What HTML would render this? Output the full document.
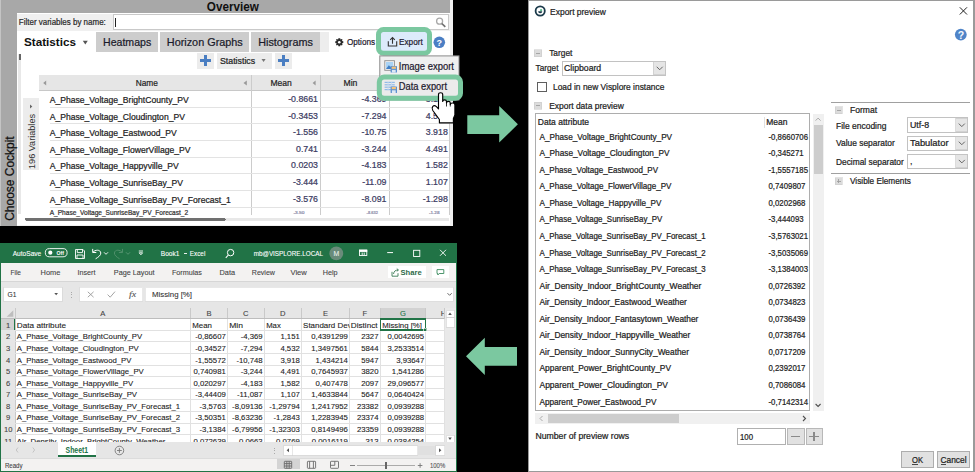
<!DOCTYPE html>
<html><head><meta charset="utf-8"><title>Visplore export</title>
<style>
html,body{margin:0;padding:0;background:#000;width:975px;height:472px;overflow:hidden}
svg{display:block;font-family:"Liberation Sans",sans-serif}
</style></head><body>
<svg width="975" height="472" viewBox="0 0 975 472" shape-rendering="crispEdges">
<rect x="0" y="0" width="975" height="472" fill="#000"/>
<rect x="0" y="0" width="453" height="226" fill="#f0f0f0"/>
<rect x="0" y="0" width="449.5" height="13" fill="#a8a8a8"/>
<rect x="0" y="0" width="17" height="226" fill="#a8a8a8"/>
<rect x="0" y="0" width="1" height="226" fill="#c4c4c4"/>
<rect x="17" y="13" width="432.5" height="213" fill="#ffffff"/>
<rect x="17" y="224.5" width="432.5" height="1.5" fill="#f0f0f0"/>
<text x="206.8" y="10.7" font-size="12" fill="#101010" font-weight="bold" textLength="52" lengthAdjust="spacingAndGlyphs">Overview</text>
<rect x="17" y="13" width="432.5" height="17.5" fill="#f0f0f0"/>
<line x1="17" y1="13.5" x2="449.5" y2="13.5" stroke="#ffffff" stroke-width="1"/>
<text x="18.8" y="25.2" font-size="8.4" fill="#2b2b2b" textLength="87" lengthAdjust="spacingAndGlyphs" stroke="#2b2b2b" stroke-width="0.22">Filter variables by name:</text>
<rect x="113" y="14.5" width="335" height="15" fill="#ffffff" stroke="#c9c9c9" stroke-width="1"/>
<line x1="115.5" y1="17.5" x2="115.5" y2="27" stroke="#222" stroke-width="1"/>
<g shape-rendering="geometricPrecision"><circle cx="439.6" cy="21.2" r="3" fill="none" stroke="#a8a8a8" stroke-width="1.3"/><line x1="441.8" y1="23.5" x2="445.3" y2="26.8" stroke="#707070" stroke-width="1.7"/></g>
<text x="24" y="45.7" font-size="11.5" fill="#111" font-weight="bold" textLength="52" lengthAdjust="spacingAndGlyphs">Statistics</text>
<path shape-rendering="geometricPrecision" d="M82.8 40.8 L87.8 40.8 L85.3 44.4 Z" fill="#555"/>
<rect x="96.2" y="31.6" width="61.89999999999999" height="20" fill="#cdcdcd"/>
<text x="103" y="45.9" font-size="11.3" fill="#1a1a2a" textLength="48.2" lengthAdjust="spacingAndGlyphs" stroke="#1a1a2a" stroke-width="0.22">Heatmaps</text>
<rect x="160.1" y="31.6" width="88.9" height="20" fill="#cdcdcd"/>
<text x="166.8" y="45.9" font-size="11.3" fill="#1a1a2a" textLength="76" lengthAdjust="spacingAndGlyphs" stroke="#1a1a2a" stroke-width="0.22">Horizon Graphs</text>
<rect x="251" y="31.6" width="68.69999999999999" height="20" fill="#cdcdcd"/>
<text x="258.2" y="45.9" font-size="11.3" fill="#1a1a2a" textLength="54.7" lengthAdjust="spacingAndGlyphs" stroke="#1a1a2a" stroke-width="0.22">Histograms</text>
<rect x="319.7" y="31.6" width="9.3" height="20" fill="#ededed"/>
<g shape-rendering="geometricPrecision" transform="translate(339.3,42.2)"><path d="M-0.9,-4 L0.9,-4 L1.2,-2.6 L2.5,-3.3 L3.3,-2.5 L2.6,-1.2 L4,-0.9 L4,0.9 L2.6,1.2 L3.3,2.5 L2.5,3.3 L1.2,2.6 L0.9,4 L-0.9,4 L-1.2,2.6 L-2.5,3.3 L-3.3,2.5 L-2.6,1.2 L-4,0.9 L-4,-0.9 L-2.6,-1.2 L-3.3,-2.5 L-2.5,-3.3 L-1.2,-2.6 Z" fill="#2a2a2a"/><circle r="1.3" fill="#fff"/></g>
<text x="347" y="45" font-size="9.6" fill="#1e1a2e" textLength="28" lengthAdjust="spacingAndGlyphs" stroke="#1e1a2e" stroke-width="0.22">Options</text>
<rect x="381" y="32" width="46" height="19.6" fill="#dcebfb"/>
<g shape-rendering="geometricPrecision" fill="none" stroke="#333" stroke-width="1.1"><path d="M388.3 41.2 V46 H396.7 V41.2"/><path d="M392.5 43.8 V37.6 M390.2 39.9 L392.5 37.6 L394.8 39.9"/></g>
<text x="399" y="45" font-size="9.6" fill="#1e1a2e" textLength="23.7" lengthAdjust="spacingAndGlyphs" stroke="#1e1a2e" stroke-width="0.22">Export</text>
<g shape-rendering="geometricPrecision"><circle cx="439.3" cy="42.3" r="5.8" fill="#4b7fc4"/><text x="439.3" y="46.3" font-size="9" font-weight="bold" fill="#fff" text-anchor="middle">?</text></g>
<rect x="197" y="52.5" width="16.7" height="16.4" fill="#ececec"/>
<rect x="203.8" y="55.3" width="3.4" height="10.5" fill="#4a7ec2"/>
<rect x="199.9" y="58.7" width="11" height="3.5" fill="#4a7ec2"/>
<rect x="217.1" y="52.5" width="54.7" height="16.4" fill="#ececec"/>
<text x="219.9" y="63.8" font-size="8.6" fill="#222" textLength="35.3" lengthAdjust="spacingAndGlyphs" stroke="#222" stroke-width="0.22">Statistics</text>
<path shape-rendering="geometricPrecision" d="M261.5 59 L265.6 59 L263.55 62.1 Z" fill="#777"/>
<rect x="275.2" y="52.5" width="16.7" height="16.4" fill="#ececec"/>
<rect x="282.0" y="55.3" width="3.4" height="10.5" fill="#4a7ec2"/>
<rect x="278.09999999999997" y="58.7" width="11" height="3.5" fill="#4a7ec2"/>
<rect x="18.2" y="54" width="3.2" height="160" fill="#e8e8e8"/>
<rect x="18.8" y="54.4" width="2.4" height="6" fill="#666" rx="1"/>
<rect x="22.7" y="97.8" width="16.6" height="72" fill="#ececec"/>
<path shape-rendering="geometricPrecision" d="M30 104.5 L32.3 106.5 L30 108.5 Z" fill="#666"/>
<text transform="translate(35.3,169) rotate(-90)" font-size="9" fill="#333" textLength="55" lengthAdjust="spacingAndGlyphs">196 Variables</text>
<text transform="translate(13.6,220.8) rotate(-90)" font-size="12.3" fill="#111" stroke="#111" stroke-width="0.25" textLength="84.5" lengthAdjust="spacingAndGlyphs">Choose Cockpit</text>
<rect x="39.2" y="74.6" width="412" height="16" fill="#e6e6e6"/>
<path shape-rendering="geometricPrecision" d="M43.2 83 L46.2 80.6 L46.2 85.4 Z" fill="#999"/>
<text x="135.7" y="85.9" font-size="9.6" fill="#222" textLength="22.2" lengthAdjust="spacingAndGlyphs" stroke="#222" stroke-width="0.22">Name</text>
<path shape-rendering="geometricPrecision" d="M243.5 83 L246.8 80.6 L246.8 85.4 Z" fill="#999"/>
<text x="270.4" y="85.9" font-size="9.6" fill="#222" textLength="21.4" lengthAdjust="spacingAndGlyphs" stroke="#222" stroke-width="0.22">Mean</text>
<path shape-rendering="geometricPrecision" d="M312.6 83 L315.6 80.6 L315.6 85.4 Z" fill="#999"/>
<text x="343.5" y="85.9" font-size="9.6" fill="#222" textLength="13.9" lengthAdjust="spacingAndGlyphs" stroke="#222" stroke-width="0.22">Min</text>
<line x1="39.2" y1="90.5" x2="451" y2="90.5" stroke="#c8c8c8" stroke-width="1"/>
<line x1="251.5" y1="74.6" x2="251.5" y2="215" stroke="#cccccc" stroke-width="1"/>
<line x1="320.5" y1="74.6" x2="320.5" y2="215" stroke="#cccccc" stroke-width="1"/>
<line x1="389.4" y1="74.6" x2="389.4" y2="215" stroke="#cccccc" stroke-width="1"/>
<line x1="449.3" y1="74.6" x2="449.3" y2="215" stroke="#cccccc" stroke-width="1"/>
<text x="49.7" y="103.0" font-size="8.6" fill="#222" stroke="#222" stroke-width="0.22">A_Phase_Voltage_BrightCounty_PV</text>
<text x="318" y="102.0" font-size="8.8" fill="#3b3b62" text-anchor="end" stroke="#3b3b62" stroke-width="0.22">-0.8661</text>
<text x="386.5" y="102.0" font-size="8.8" fill="#3b3b62" text-anchor="end" stroke="#3b3b62" stroke-width="0.22">-4.369</text>
<text x="447.8" y="102.0" font-size="8.8" fill="#3b3b62" text-anchor="end" stroke="#3b3b62" stroke-width="0.22">3.151</text>
<line x1="50" y1="107.3" x2="449.3" y2="107.3" stroke="#e3e3e3" stroke-width="1"/>
<text x="49.7" y="119.6" font-size="8.6" fill="#222" stroke="#222" stroke-width="0.22">A_Phase_Voltage_Cloudington_PV</text>
<text x="318" y="118.6" font-size="8.8" fill="#3b3b62" text-anchor="end" stroke="#3b3b62" stroke-width="0.22">-0.3453</text>
<text x="386.5" y="118.6" font-size="8.8" fill="#3b3b62" text-anchor="end" stroke="#3b3b62" stroke-width="0.22">-7.294</text>
<text x="447.8" y="118.6" font-size="8.8" fill="#3b3b62" text-anchor="end" stroke="#3b3b62" stroke-width="0.22">4.532</text>
<line x1="50" y1="123.92" x2="449.3" y2="123.92" stroke="#e3e3e3" stroke-width="1"/>
<text x="49.7" y="136.2" font-size="8.6" fill="#222" stroke="#222" stroke-width="0.22">A_Phase_Voltage_Eastwood_PV</text>
<text x="318" y="135.2" font-size="8.8" fill="#3b3b62" text-anchor="end" stroke="#3b3b62" stroke-width="0.22">-1.556</text>
<text x="386.5" y="135.2" font-size="8.8" fill="#3b3b62" text-anchor="end" stroke="#3b3b62" stroke-width="0.22">-10.75</text>
<text x="447.8" y="135.2" font-size="8.8" fill="#3b3b62" text-anchor="end" stroke="#3b3b62" stroke-width="0.22">3.918</text>
<line x1="50" y1="140.54" x2="449.3" y2="140.54" stroke="#e3e3e3" stroke-width="1"/>
<text x="49.7" y="152.8" font-size="8.6" fill="#222" stroke="#222" stroke-width="0.22">A_Phase_Voltage_FlowerVillage_PV</text>
<text x="318" y="151.8" font-size="8.8" fill="#3b3b62" text-anchor="end" stroke="#3b3b62" stroke-width="0.22">0.741</text>
<text x="386.5" y="151.8" font-size="8.8" fill="#3b3b62" text-anchor="end" stroke="#3b3b62" stroke-width="0.22">-3.244</text>
<text x="447.8" y="151.8" font-size="8.8" fill="#3b3b62" text-anchor="end" stroke="#3b3b62" stroke-width="0.22">4.491</text>
<line x1="50" y1="157.16" x2="449.3" y2="157.16" stroke="#e3e3e3" stroke-width="1"/>
<text x="49.7" y="169.4" font-size="8.6" fill="#222" stroke="#222" stroke-width="0.22">A_Phase_Voltage_Happyville_PV</text>
<text x="318" y="168.4" font-size="8.8" fill="#3b3b62" text-anchor="end" stroke="#3b3b62" stroke-width="0.22">0.0203</text>
<text x="386.5" y="168.4" font-size="8.8" fill="#3b3b62" text-anchor="end" stroke="#3b3b62" stroke-width="0.22">-4.183</text>
<text x="447.8" y="168.4" font-size="8.8" fill="#3b3b62" text-anchor="end" stroke="#3b3b62" stroke-width="0.22">1.582</text>
<line x1="50" y1="173.78" x2="449.3" y2="173.78" stroke="#e3e3e3" stroke-width="1"/>
<text x="49.7" y="186.0" font-size="8.6" fill="#222" stroke="#222" stroke-width="0.22">A_Phase_Voltage_SunriseBay_PV</text>
<text x="318" y="185.0" font-size="8.8" fill="#3b3b62" text-anchor="end" stroke="#3b3b62" stroke-width="0.22">-3.444</text>
<text x="386.5" y="185.0" font-size="8.8" fill="#3b3b62" text-anchor="end" stroke="#3b3b62" stroke-width="0.22">-11.09</text>
<text x="447.8" y="185.0" font-size="8.8" fill="#3b3b62" text-anchor="end" stroke="#3b3b62" stroke-width="0.22">1.107</text>
<line x1="50" y1="190.4" x2="449.3" y2="190.4" stroke="#e3e3e3" stroke-width="1"/>
<text x="49.7" y="202.60000000000002" font-size="8.6" fill="#222" stroke="#222" stroke-width="0.22">A_Phase_Voltage_SunriseBay_PV_Forecast_1</text>
<text x="318" y="201.60000000000002" font-size="8.8" fill="#3b3b62" text-anchor="end" stroke="#3b3b62" stroke-width="0.22">-3.576</text>
<text x="386.5" y="201.60000000000002" font-size="8.8" fill="#3b3b62" text-anchor="end" stroke="#3b3b62" stroke-width="0.22">-8.091</text>
<text x="447.8" y="201.60000000000002" font-size="8.8" fill="#3b3b62" text-anchor="end" stroke="#3b3b62" stroke-width="0.22">-1.298</text>
<line x1="50" y1="207.01999999999998" x2="449.3" y2="207.01999999999998" stroke="#e3e3e3" stroke-width="1"/>
<text x="49.7" y="214.9" font-size="6.6" fill="#333" textLength="138.5" lengthAdjust="spacingAndGlyphs" stroke="#333" stroke-width="0.22">A_Phase_Voltage_SunriseBay_PV_Forecast_2</text>
<text x="293.4" y="214.2" font-size="4.4" fill="#8a8aa8" textLength="11.0" lengthAdjust="spacingAndGlyphs" stroke="#8a8aa8" stroke-width="0.22">-3.50</text>
<text x="366.6" y="214.2" font-size="4.4" fill="#8a8aa8" textLength="11.299999999999955" lengthAdjust="spacingAndGlyphs" stroke="#8a8aa8" stroke-width="0.22">-8.632</text>
<text x="428.9" y="214.2" font-size="4.4" fill="#8a8aa8" textLength="10.600000000000023" lengthAdjust="spacingAndGlyphs" stroke="#8a8aa8" stroke-width="0.22">-1.28</text>
<rect x="25" y="217.6" width="424" height="3.2" fill="#e8e8e8"/>
<rect x="25" y="217.6" width="200.7" height="3.2" fill="#707070" rx="1.5"/>
<rect x="0" y="243" width="457" height="229" fill="#217346"/>
<rect x="1" y="263" width="454.5" height="206.6" fill="#f3f2f1"/>
<text x="12.7" y="255.9" font-size="7.2" fill="#ffffff" textLength="28.6" lengthAdjust="spacingAndGlyphs" stroke="#ffffff" stroke-width="0.1">AutoSave</text>
<g shape-rendering="geometricPrecision">
<rect x="45.3" y="248.6" width="21.8" height="8.2" fill="none" stroke="#fff" stroke-width="0.9" rx="4.1"/>
<circle cx="50.3" cy="252.7" r="2.1" fill="#fff"/>
<text x="56.6" y="255.3" font-size="5.8" fill="#fff" font-weight="bold" textLength="7.4" lengthAdjust="spacingAndGlyphs">Off</text>
<path shape-rendering="geometricPrecision" d="M75.5 249.5 H83 L84.5 251 V258.5 H75.5 Z M77.3 249.5 V252.6 H82.5 V249.5 M77 258.5 V255 H83 V258.5" fill="none" stroke="#fff" stroke-width="0.9"/>
<path shape-rendering="geometricPrecision" d="M92.9 252.3 C95 249.6 100.4 249.2 100.8 253 C101 255.2 98.3 257.2 95.6 258.8 M92.7 248.9 V252.5 H96.3" fill="none" stroke="#fff" stroke-width="1"/>
<path shape-rendering="geometricPrecision" d="M104 252.3 L106 254.3 L108 252.3" fill="none" stroke="#fff" stroke-width="0.9"/>
<path shape-rendering="geometricPrecision" d="M122.3 252.3 C120.2 249.6 114.8 249.2 114.4 253 C114.2 255.2 116.9 257.2 119.6 258.8 M122.5 248.9 V252.5 H118.9" fill="none" stroke="#4f8f6a" stroke-width="1"/>
<path shape-rendering="geometricPrecision" d="M126 252.3 L128 254.3 L130 252.3" fill="none" stroke="#5c9a77" stroke-width="0.9"/>
<path shape-rendering="geometricPrecision" d="M138.8 251 H143 M139.2 252.8 L140.9 254.8 L142.6 252.8 Z" fill="none" stroke="#fff" stroke-width="0.9"/>
</g>
<text x="160.8" y="255.9" font-size="7.2" fill="#ffffff" textLength="18.6" lengthAdjust="spacingAndGlyphs" stroke="#ffffff" stroke-width="0.1">Book1</text>
<line x1="184.3" y1="253.2" x2="186.6" y2="253.2" stroke="#fff" stroke-width="0.9"/>
<text x="189.8" y="255.9" font-size="7.2" fill="#ffffff" textLength="15.5" lengthAdjust="spacingAndGlyphs" stroke="#ffffff" stroke-width="0.1">Excel</text>
<g shape-rendering="geometricPrecision"><circle cx="230.6" cy="252.6" r="3.2" fill="none" stroke="#fff" stroke-width="1"/><line x1="228.3" y1="255" x2="225.8" y2="257.8" stroke="#fff" stroke-width="1.1"/></g>
<text x="253.7" y="256" font-size="7.2" fill="#ffffff" textLength="69.3" lengthAdjust="spacingAndGlyphs" stroke="#ffffff" stroke-width="0.1">mb@VISPLORE.LOCAL</text>
<g shape-rendering="geometricPrecision"><circle cx="336.3" cy="253.4" r="6.9" fill="#6a8b7a"/></g>
<text x="333.5" y="256.3" font-size="7" fill="#e8efe9" textLength="5.7" lengthAdjust="spacingAndGlyphs" stroke="#e8efe9" stroke-width="0.1">M</text>
<g shape-rendering="geometricPrecision" fill="none" stroke="#fff" stroke-width="0.9">
<rect x="359.5" y="250.3" width="7.3" height="5.2" fill="none" stroke="#fff" stroke-width="0.9"/>
<rect x="359.5" y="250" width="7.3" height="1.6" fill="#fff"/>
<path shape-rendering="geometricPrecision" d="M362.2 252.6 V255 M364.2 252.6 V255" fill="none"/>
<line x1="387.2" y1="252.6" x2="393" y2="252.6" stroke="#fff" stroke-width="1"/>
<rect x="413.6" y="250.3" width="6.2" height="6.2" fill="none" stroke="#fff" stroke-width="0.9"/>
<path shape-rendering="geometricPrecision" d="M440 249.8 L446 255.8 M446 249.8 L440 255.8" fill="none"/>
</g>
<text x="10.5" y="275" font-size="7.6" fill="#444444" textLength="10.5" lengthAdjust="spacingAndGlyphs" stroke="#444444" stroke-width="0.1">File</text>
<text x="40.6" y="275" font-size="7.6" fill="#444444" textLength="19.799999999999997" lengthAdjust="spacingAndGlyphs" stroke="#444444" stroke-width="0.1">Home</text>
<text x="77.5" y="275" font-size="7.6" fill="#444444" textLength="18.0" lengthAdjust="spacingAndGlyphs" stroke="#444444" stroke-width="0.1">Insert</text>
<text x="113.8" y="275" font-size="7.6" fill="#444444" textLength="40.7" lengthAdjust="spacingAndGlyphs" stroke="#444444" stroke-width="0.1">Page Layout</text>
<text x="171.9" y="275" font-size="7.6" fill="#444444" textLength="30.099999999999994" lengthAdjust="spacingAndGlyphs" stroke="#444444" stroke-width="0.1">Formulas</text>
<text x="219.5" y="275" font-size="7.6" fill="#444444" textLength="15.5" lengthAdjust="spacingAndGlyphs" stroke="#444444" stroke-width="0.1">Data</text>
<text x="251.8" y="275" font-size="7.6" fill="#444444" textLength="23.099999999999966" lengthAdjust="spacingAndGlyphs" stroke="#444444" stroke-width="0.1">Review</text>
<text x="290.5" y="275" font-size="7.6" fill="#444444" textLength="16.30000000000001" lengthAdjust="spacingAndGlyphs" stroke="#444444" stroke-width="0.1">View</text>
<text x="322.7" y="275" font-size="7.6" fill="#444444" textLength="14.800000000000011" lengthAdjust="spacingAndGlyphs" stroke="#444444" stroke-width="0.1">Help</text>
<rect x="387.6" y="266" width="38.4" height="12.2" fill="#ffffff"/>
<g shape-rendering="geometricPrecision" fill="none" stroke="#3a7a55" stroke-width="0.9"><path d="M392 271.8 V276.2 H398 V273.2"/><path d="M393.5 274 C394 271 395.5 270 398.3 270 M396.8 268.6 L398.4 270 L396.8 271.4"/></g>
<text x="400.5" y="274.8" font-size="7.8" fill="#2f6b4a" font-weight="bold" textLength="21.2" lengthAdjust="spacingAndGlyphs">Share</text>
<rect x="431.7" y="266" width="17.3" height="12.2" fill="#ffffff"/>
<path shape-rendering="geometricPrecision" d="M437 269.6 H443.8 V273.5 H439.2 L437.8 275 V273.5 H437 Z" fill="none" stroke="#3a8a5c" stroke-width="0.9"/>
<rect x="1" y="281" width="454.5" height="26.7" fill="#e6e6e6"/>
<line x1="1" y1="281.3" x2="455.5" y2="281.3" stroke="#d6d6d6" stroke-width="1"/>
<rect x="3.6" y="287.3" width="58.5" height="14" fill="#ffffff" stroke="#d4d4d4" stroke-width="0.6"/>
<text x="7.6" y="297.1" font-size="8" fill="#333" textLength="8.9" lengthAdjust="spacingAndGlyphs" stroke="#333" stroke-width="0.1">G1</text>
<path shape-rendering="geometricPrecision" d="M54.3 293 L58 293 L56.15 295.3 Z" fill="#555"/>
<rect x="70.6" y="291.5" width="1.2" height="1.2" fill="#aaa"/>
<rect x="70.6" y="294" width="1.2" height="1.2" fill="#aaa"/>
<rect x="70.6" y="296.5" width="1.2" height="1.2" fill="#aaa"/>
<rect x="79.7" y="287.4" width="63.1" height="13.9" fill="#ffffff" stroke="#d8d8d8" stroke-width="0.6"/>
<g shape-rendering="geometricPrecision" fill="none" stroke="#9a9a9a" stroke-width="0.9"><path d="M87.8 291.8 L93.6 297.2 M93.6 291.8 L87.8 297.2"/><path d="M107.6 294.6 L110.2 297.2 L115 291.6"/></g>
<text x="129" y="297" font-size="8" fill="#555" font-family="Liberation Serif" textLength="7.2" lengthAdjust="spacingAndGlyphs" stroke="#555" stroke-width="0.1" font-style="italic">fx</text>
<rect x="145.4" y="287.4" width="308" height="13.9" fill="#ffffff" stroke="#d8d8d8" stroke-width="0.6"/>
<text x="152" y="296.5" font-size="8" fill="#333" textLength="40" lengthAdjust="spacingAndGlyphs" stroke="#333" stroke-width="0.1">Missing [%]</text>
<path shape-rendering="geometricPrecision" d="M447.5 293.2 L449.6 295.3 L451.7 293.2" fill="none" stroke="#555" stroke-width="0.9"/>
<rect x="1" y="307.7" width="444" height="11.1" fill="#e6e6e6"/>
<rect x="380.1" y="307.7" width="45.7" height="11.1" fill="#d2d2d2"/>
<path shape-rendering="geometricPrecision" d="M6.7 316.7 L13.3 316.7 L13.3 310.3 Z" fill="#bdbdbd"/>
<text x="102.85" y="316.3" font-size="7.6" fill="#444" text-anchor="middle" stroke="#444" stroke-width="0.1">A</text>
<line x1="190.5" y1="307.7" x2="190.5" y2="318.8" stroke="#c9c9c9" stroke-width="1"/>
<text x="208.95" y="316.3" font-size="7.6" fill="#444" text-anchor="middle" stroke="#444" stroke-width="0.1">B</text>
<line x1="227.4" y1="307.7" x2="227.4" y2="318.8" stroke="#c9c9c9" stroke-width="1"/>
<text x="245.85000000000002" y="316.3" font-size="7.6" fill="#444" text-anchor="middle" stroke="#444" stroke-width="0.1">C</text>
<line x1="264.3" y1="307.7" x2="264.3" y2="318.8" stroke="#c9c9c9" stroke-width="1"/>
<text x="282.85" y="316.3" font-size="7.6" fill="#444" text-anchor="middle" stroke="#444" stroke-width="0.1">D</text>
<line x1="301.4" y1="307.7" x2="301.4" y2="318.8" stroke="#c9c9c9" stroke-width="1"/>
<text x="325.45" y="316.3" font-size="7.6" fill="#444" text-anchor="middle" stroke="#444" stroke-width="0.1">E</text>
<line x1="349.5" y1="307.7" x2="349.5" y2="318.8" stroke="#c9c9c9" stroke-width="1"/>
<text x="364.8" y="316.3" font-size="7.6" fill="#444" text-anchor="middle" stroke="#444" stroke-width="0.1">F</text>
<line x1="380.1" y1="307.7" x2="380.1" y2="318.8" stroke="#c9c9c9" stroke-width="1"/>
<text x="402.95000000000005" y="316.3" font-size="7.6" fill="#217346" text-anchor="middle" stroke="#217346" stroke-width="0.1">G</text>
<line x1="425.8" y1="307.7" x2="425.8" y2="318.8" stroke="#c9c9c9" stroke-width="1"/>
<text x="443.5" y="316.3" font-size="7.6" fill="#444" text-anchor="middle" stroke="#444" stroke-width="0.1">H</text>
<line x1="444" y1="307.7" x2="444" y2="318.8" stroke="#c9c9c9" stroke-width="1"/>
<line x1="15.2" y1="307.7" x2="15.2" y2="442.2" stroke="#c9c9c9" stroke-width="1"/>
<line x1="1" y1="318.6" x2="444" y2="318.6" stroke="#bdbdbd" stroke-width="1"/>
<line x1="380.1" y1="318.4" x2="425.8" y2="318.4" stroke="#217346" stroke-width="1.2"/>
<rect x="1" y="318.8" width="14.2" height="123.39999999999998" fill="#e6e6e6"/>
<rect x="1" y="318.8" width="14.2" height="11.58" fill="#d2d2d2"/>
<line x1="14.6" y1="318.8" x2="14.6" y2="330.38" stroke="#217346" stroke-width="1.4"/>
<rect x="15.7" y="318.8" width="428.3" height="123.39999999999998" fill="#ffffff"/>
<clipPath id="gridclip"><rect x="1" y="318.8" width="444" height="123.4"/></clipPath>
<g clip-path="url(#gridclip)">
<line x1="15.2" y1="330.38" x2="444" y2="330.38" stroke="#e1e1e1" stroke-width="1"/>
<line x1="15.2" y1="341.96" x2="444" y2="341.96" stroke="#e1e1e1" stroke-width="1"/>
<line x1="15.2" y1="353.54" x2="444" y2="353.54" stroke="#e1e1e1" stroke-width="1"/>
<line x1="15.2" y1="365.12" x2="444" y2="365.12" stroke="#e1e1e1" stroke-width="1"/>
<line x1="15.2" y1="376.7" x2="444" y2="376.7" stroke="#e1e1e1" stroke-width="1"/>
<line x1="15.2" y1="388.28" x2="444" y2="388.28" stroke="#e1e1e1" stroke-width="1"/>
<line x1="15.2" y1="399.86" x2="444" y2="399.86" stroke="#e1e1e1" stroke-width="1"/>
<line x1="15.2" y1="411.44" x2="444" y2="411.44" stroke="#e1e1e1" stroke-width="1"/>
<line x1="15.2" y1="423.02" x2="444" y2="423.02" stroke="#e1e1e1" stroke-width="1"/>
<line x1="15.2" y1="434.59999999999997" x2="444" y2="434.59999999999997" stroke="#e1e1e1" stroke-width="1"/>
<line x1="15.2" y1="446.18" x2="444" y2="446.18" stroke="#e1e1e1" stroke-width="1"/>
<line x1="190.5" y1="318.8" x2="190.5" y2="442.2" stroke="#e1e1e1" stroke-width="1"/>
<line x1="227.4" y1="318.8" x2="227.4" y2="442.2" stroke="#e1e1e1" stroke-width="1"/>
<line x1="264.3" y1="318.8" x2="264.3" y2="442.2" stroke="#e1e1e1" stroke-width="1"/>
<line x1="301.4" y1="318.8" x2="301.4" y2="442.2" stroke="#e1e1e1" stroke-width="1"/>
<line x1="349.5" y1="318.8" x2="349.5" y2="442.2" stroke="#e1e1e1" stroke-width="1"/>
<line x1="380.1" y1="318.8" x2="380.1" y2="442.2" stroke="#e1e1e1" stroke-width="1"/>
<line x1="425.8" y1="318.8" x2="425.8" y2="442.2" stroke="#e1e1e1" stroke-width="1"/>
<line x1="444" y1="318.8" x2="444" y2="442.2" stroke="#e1e1e1" stroke-width="1"/>
<text x="8.2" y="327.8" font-size="7.6" fill="#444" text-anchor="middle" stroke="#444" stroke-width="0.1">1</text>
<text x="16.8" y="327.8" font-size="7.75" fill="#222" textLength="49.3" lengthAdjust="spacingAndGlyphs" stroke="#222" stroke-width="0.1">Data attribute</text>
<text x="192.3" y="327.8" font-size="7.75" fill="#222" textLength="19.7" lengthAdjust="spacingAndGlyphs" stroke="#222" stroke-width="0.1">Mean</text>
<text x="229.2" y="327.8" font-size="7.75" fill="#222" textLength="13.8" lengthAdjust="spacingAndGlyphs" stroke="#222" stroke-width="0.1">Min</text>
<text x="266.2" y="327.8" font-size="7.75" fill="#222" textLength="14.6" lengthAdjust="spacingAndGlyphs" stroke="#222" stroke-width="0.1">Max</text>
<clipPath id="e1clip"><rect x="301.4" y="318.8" width="48.1" height="11.6"/></clipPath><g clip-path="url(#e1clip)">
<text x="303.1" y="327.8" font-size="7.75" fill="#222" textLength="48.5" lengthAdjust="spacingAndGlyphs" stroke="#222" stroke-width="0.1">Standard Dev</text>
</g>
<text x="350.8" y="327.8" font-size="7.75" fill="#222" textLength="26.8" lengthAdjust="spacingAndGlyphs" stroke="#222" stroke-width="0.1">Distinct</text>
<text x="382.2" y="327.8" font-size="7.75" fill="#222" textLength="39.7" lengthAdjust="spacingAndGlyphs" stroke="#222" stroke-width="0.1">Missing [%]</text>
<text x="8.2" y="339.38" font-size="7.6" fill="#444" text-anchor="middle" stroke="#444" stroke-width="0.1">2</text>
<text x="16.8" y="339.38" font-size="7.75" fill="#222" stroke="#222" stroke-width="0.1">A_Phase_Voltage_BrightCounty_PV</text>
<text x="225.8" y="339.38" font-size="7.75" fill="#222" text-anchor="end" stroke="#222" stroke-width="0.1">-0,86607</text>
<text x="262.7" y="339.38" font-size="7.75" fill="#222" text-anchor="end" stroke="#222" stroke-width="0.1">-4,369</text>
<text x="299.79999999999995" y="339.38" font-size="7.75" fill="#222" text-anchor="end" stroke="#222" stroke-width="0.1">1,151</text>
<text x="347.9" y="339.38" font-size="7.75" fill="#222" text-anchor="end" stroke="#222" stroke-width="0.1">0,4391299</text>
<text x="378.5" y="339.38" font-size="7.75" fill="#222" text-anchor="end" stroke="#222" stroke-width="0.1">2327</text>
<text x="424.2" y="339.38" font-size="7.75" fill="#222" text-anchor="end" stroke="#222" stroke-width="0.1">0,0042695</text>
<text x="8.2" y="350.96000000000004" font-size="7.6" fill="#444" text-anchor="middle" stroke="#444" stroke-width="0.1">3</text>
<text x="16.8" y="350.96000000000004" font-size="7.75" fill="#222" stroke="#222" stroke-width="0.1">A_Phase_Voltage_Cloudington_PV</text>
<text x="225.8" y="350.96000000000004" font-size="7.75" fill="#222" text-anchor="end" stroke="#222" stroke-width="0.1">-0,34527</text>
<text x="262.7" y="350.96000000000004" font-size="7.75" fill="#222" text-anchor="end" stroke="#222" stroke-width="0.1">-7,294</text>
<text x="299.79999999999995" y="350.96000000000004" font-size="7.75" fill="#222" text-anchor="end" stroke="#222" stroke-width="0.1">4,532</text>
<text x="347.9" y="350.96000000000004" font-size="7.75" fill="#222" text-anchor="end" stroke="#222" stroke-width="0.1">1,3497561</text>
<text x="378.5" y="350.96000000000004" font-size="7.75" fill="#222" text-anchor="end" stroke="#222" stroke-width="0.1">5844</text>
<text x="424.2" y="350.96000000000004" font-size="7.75" fill="#222" text-anchor="end" stroke="#222" stroke-width="0.1">3,2533514</text>
<text x="8.2" y="362.54" font-size="7.6" fill="#444" text-anchor="middle" stroke="#444" stroke-width="0.1">4</text>
<text x="16.8" y="362.54" font-size="7.75" fill="#222" stroke="#222" stroke-width="0.1">A_Phase_Voltage_Eastwood_PV</text>
<text x="225.8" y="362.54" font-size="7.75" fill="#222" text-anchor="end" stroke="#222" stroke-width="0.1">-1,55572</text>
<text x="262.7" y="362.54" font-size="7.75" fill="#222" text-anchor="end" stroke="#222" stroke-width="0.1">-10,748</text>
<text x="299.79999999999995" y="362.54" font-size="7.75" fill="#222" text-anchor="end" stroke="#222" stroke-width="0.1">3,918</text>
<text x="347.9" y="362.54" font-size="7.75" fill="#222" text-anchor="end" stroke="#222" stroke-width="0.1">1,434214</text>
<text x="378.5" y="362.54" font-size="7.75" fill="#222" text-anchor="end" stroke="#222" stroke-width="0.1">5947</text>
<text x="424.2" y="362.54" font-size="7.75" fill="#222" text-anchor="end" stroke="#222" stroke-width="0.1">3,93647</text>
<text x="8.2" y="374.12" font-size="7.6" fill="#444" text-anchor="middle" stroke="#444" stroke-width="0.1">5</text>
<text x="16.8" y="374.12" font-size="7.75" fill="#222" stroke="#222" stroke-width="0.1">A_Phase_Voltage_FlowerVillage_PV</text>
<text x="225.8" y="374.12" font-size="7.75" fill="#222" text-anchor="end" stroke="#222" stroke-width="0.1">0,740981</text>
<text x="262.7" y="374.12" font-size="7.75" fill="#222" text-anchor="end" stroke="#222" stroke-width="0.1">-3,244</text>
<text x="299.79999999999995" y="374.12" font-size="7.75" fill="#222" text-anchor="end" stroke="#222" stroke-width="0.1">4,491</text>
<text x="347.9" y="374.12" font-size="7.75" fill="#222" text-anchor="end" stroke="#222" stroke-width="0.1">0,7645937</text>
<text x="378.5" y="374.12" font-size="7.75" fill="#222" text-anchor="end" stroke="#222" stroke-width="0.1">3820</text>
<text x="424.2" y="374.12" font-size="7.75" fill="#222" text-anchor="end" stroke="#222" stroke-width="0.1">1,541286</text>
<text x="8.2" y="385.7" font-size="7.6" fill="#444" text-anchor="middle" stroke="#444" stroke-width="0.1">6</text>
<text x="16.8" y="385.7" font-size="7.75" fill="#222" stroke="#222" stroke-width="0.1">A_Phase_Voltage_Happyville_PV</text>
<text x="225.8" y="385.7" font-size="7.75" fill="#222" text-anchor="end" stroke="#222" stroke-width="0.1">0,020297</text>
<text x="262.7" y="385.7" font-size="7.75" fill="#222" text-anchor="end" stroke="#222" stroke-width="0.1">-4,183</text>
<text x="299.79999999999995" y="385.7" font-size="7.75" fill="#222" text-anchor="end" stroke="#222" stroke-width="0.1">1,582</text>
<text x="347.9" y="385.7" font-size="7.75" fill="#222" text-anchor="end" stroke="#222" stroke-width="0.1">0,407478</text>
<text x="378.5" y="385.7" font-size="7.75" fill="#222" text-anchor="end" stroke="#222" stroke-width="0.1">2097</text>
<text x="424.2" y="385.7" font-size="7.75" fill="#222" text-anchor="end" stroke="#222" stroke-width="0.1">29,096577</text>
<text x="8.2" y="397.28000000000003" font-size="7.6" fill="#444" text-anchor="middle" stroke="#444" stroke-width="0.1">7</text>
<text x="16.8" y="397.28000000000003" font-size="7.75" fill="#222" stroke="#222" stroke-width="0.1">A_Phase_Voltage_SunriseBay_PV</text>
<text x="225.8" y="397.28000000000003" font-size="7.75" fill="#222" text-anchor="end" stroke="#222" stroke-width="0.1">-3,44409</text>
<text x="262.7" y="397.28000000000003" font-size="7.75" fill="#222" text-anchor="end" stroke="#222" stroke-width="0.1">-11,087</text>
<text x="299.79999999999995" y="397.28000000000003" font-size="7.75" fill="#222" text-anchor="end" stroke="#222" stroke-width="0.1">1,107</text>
<text x="347.9" y="397.28000000000003" font-size="7.75" fill="#222" text-anchor="end" stroke="#222" stroke-width="0.1">1,4633844</text>
<text x="378.5" y="397.28000000000003" font-size="7.75" fill="#222" text-anchor="end" stroke="#222" stroke-width="0.1">5647</text>
<text x="424.2" y="397.28000000000003" font-size="7.75" fill="#222" text-anchor="end" stroke="#222" stroke-width="0.1">0,0640424</text>
<text x="8.2" y="408.86" font-size="7.6" fill="#444" text-anchor="middle" stroke="#444" stroke-width="0.1">8</text>
<text x="16.8" y="408.86" font-size="7.75" fill="#222" stroke="#222" stroke-width="0.1">A_Phase_Voltage_SunriseBay_PV_Forecast_1</text>
<text x="225.8" y="408.86" font-size="7.75" fill="#222" text-anchor="end" stroke="#222" stroke-width="0.1">-3,5763</text>
<text x="262.7" y="408.86" font-size="7.75" fill="#222" text-anchor="end" stroke="#222" stroke-width="0.1">-8,09136</text>
<text x="299.79999999999995" y="408.86" font-size="7.75" fill="#222" text-anchor="end" stroke="#222" stroke-width="0.1">-1,29794</text>
<text x="347.9" y="408.86" font-size="7.75" fill="#222" text-anchor="end" stroke="#222" stroke-width="0.1">1,2417952</text>
<text x="378.5" y="408.86" font-size="7.75" fill="#222" text-anchor="end" stroke="#222" stroke-width="0.1">23382</text>
<text x="424.2" y="408.86" font-size="7.75" fill="#222" text-anchor="end" stroke="#222" stroke-width="0.1">0,0939288</text>
<text x="8.2" y="420.44" font-size="7.6" fill="#444" text-anchor="middle" stroke="#444" stroke-width="0.1">9</text>
<text x="16.8" y="420.44" font-size="7.75" fill="#222" stroke="#222" stroke-width="0.1">A_Phase_Voltage_SunriseBay_PV_Forecast_2</text>
<text x="225.8" y="420.44" font-size="7.75" fill="#222" text-anchor="end" stroke="#222" stroke-width="0.1">-3,50351</text>
<text x="262.7" y="420.44" font-size="7.75" fill="#222" text-anchor="end" stroke="#222" stroke-width="0.1">-8,63236</text>
<text x="299.79999999999995" y="420.44" font-size="7.75" fill="#222" text-anchor="end" stroke="#222" stroke-width="0.1">-1,2843</text>
<text x="347.9" y="420.44" font-size="7.75" fill="#222" text-anchor="end" stroke="#222" stroke-width="0.1">1,2283945</text>
<text x="378.5" y="420.44" font-size="7.75" fill="#222" text-anchor="end" stroke="#222" stroke-width="0.1">23374</text>
<text x="424.2" y="420.44" font-size="7.75" fill="#222" text-anchor="end" stroke="#222" stroke-width="0.1">0,0939288</text>
<text x="8.2" y="432.02" font-size="7.6" fill="#444" text-anchor="middle" stroke="#444" stroke-width="0.1">10</text>
<text x="16.8" y="432.02" font-size="7.75" fill="#222" stroke="#222" stroke-width="0.1">A_Phase_Voltage_SunriseBay_PV_Forecast_3</text>
<text x="225.8" y="432.02" font-size="7.75" fill="#222" text-anchor="end" stroke="#222" stroke-width="0.1">-3,1384</text>
<text x="262.7" y="432.02" font-size="7.75" fill="#222" text-anchor="end" stroke="#222" stroke-width="0.1">-6,79956</text>
<text x="299.79999999999995" y="432.02" font-size="7.75" fill="#222" text-anchor="end" stroke="#222" stroke-width="0.1">-1,32303</text>
<text x="347.9" y="432.02" font-size="7.75" fill="#222" text-anchor="end" stroke="#222" stroke-width="0.1">0,8149496</text>
<text x="378.5" y="432.02" font-size="7.75" fill="#222" text-anchor="end" stroke="#222" stroke-width="0.1">23359</text>
<text x="424.2" y="432.02" font-size="7.75" fill="#222" text-anchor="end" stroke="#222" stroke-width="0.1">0,0939288</text>
<text x="8.2" y="443.6" font-size="7.6" fill="#444" text-anchor="middle" stroke="#444" stroke-width="0.1">11</text>
<text x="16.8" y="443.6" font-size="7.75" fill="#222" stroke="#222" stroke-width="0.1">Air_Density_Indoor_BrightCounty_Weather</text>
<text x="225.8" y="443.6" font-size="7.75" fill="#222" text-anchor="end" stroke="#222" stroke-width="0.1">0,072639</text>
<text x="262.7" y="443.6" font-size="7.75" fill="#222" text-anchor="end" stroke="#222" stroke-width="0.1">0,0663</text>
<text x="299.79999999999995" y="443.6" font-size="7.75" fill="#222" text-anchor="end" stroke="#222" stroke-width="0.1">0,0769</text>
<text x="347.9" y="443.6" font-size="7.75" fill="#222" text-anchor="end" stroke="#222" stroke-width="0.1">0,0016119</text>
<text x="378.5" y="443.6" font-size="7.75" fill="#222" text-anchor="end" stroke="#222" stroke-width="0.1">313</text>
<text x="424.2" y="443.6" font-size="7.75" fill="#222" text-anchor="end" stroke="#222" stroke-width="0.1">0,0384254</text>
</g>
<rect x="380.6" y="319.2" width="44.7" height="10.9" fill="none" stroke="#217346" stroke-width="1.3"/>
<rect x="423.8" y="328.4" width="3" height="3" fill="#217346" stroke="#fff" stroke-width="0.6"/>
<rect x="445" y="307.7" width="10.5" height="135" fill="#e9e9e9"/>
<rect x="446" y="310" width="8" height="7.2" fill="#fff" stroke="#cfcfcf" stroke-width="0.6"/>
<path shape-rendering="geometricPrecision" d="M448.2 315 L450 312.6 L451.8 315 Z" fill="#555"/>
<rect x="446" y="317.6" width="8" height="9.6" fill="#fff" stroke="#cfcfcf" stroke-width="0.6"/>
<rect x="446" y="435" width="8" height="7.2" fill="#fff" stroke="#cfcfcf" stroke-width="0.6"/>
<path shape-rendering="geometricPrecision" d="M448.2 437.6 L450 440 L451.8 437.6 Z" fill="#555"/>
<rect x="1" y="442.2" width="454.5" height="16" fill="#e6e6e6"/>
<path shape-rendering="geometricPrecision" d="M18 447.5 L16.2 450 L18 452.5" fill="none" stroke="#bbb" stroke-width="0.8"/>
<path shape-rendering="geometricPrecision" d="M32.8 447.5 L34.6 450 L32.8 452.5" fill="none" stroke="#bbb" stroke-width="0.8"/>
<rect x="58.3" y="442.2" width="37.2" height="14.3" fill="#ffffff"/>
<rect x="58.3" y="455" width="37.2" height="1.6" fill="#217346"/>
<text x="65.6" y="452.7" font-size="8.2" fill="#217346" font-weight="bold" textLength="22.5" lengthAdjust="spacingAndGlyphs">Sheet1</text>
<g shape-rendering="geometricPrecision"><circle cx="119.4" cy="450.5" r="4.3" fill="none" stroke="#777" stroke-width="0.9"/><path d="M117 450.5 H121.8 M119.4 448.1 V452.9" stroke="#777" stroke-width="0.9"/></g>
<rect x="274" y="447.5" width="1" height="1" fill="#aaa"/>
<rect x="274" y="450" width="1" height="1" fill="#aaa"/>
<rect x="274" y="452.5" width="1" height="1" fill="#aaa"/>
<rect x="283.8" y="445.7" width="160.7" height="9.3" fill="#e0e0e0"/>
<rect x="283.8" y="445.7" width="8.4" height="9.3" fill="#fff" stroke="#d0d0d0" stroke-width="0.5"/>
<path shape-rendering="geometricPrecision" d="M289 448.3 L286.6 450.3 L289 452.3 Z" fill="#555"/>
<rect x="292.2" y="445.7" width="125.3" height="9.3" fill="#ffffff" stroke="#d0d0d0" stroke-width="0.5"/>
<rect x="435.8" y="445.7" width="8.7" height="9.3" fill="#fff" stroke="#d0d0d0" stroke-width="0.5"/>
<path shape-rendering="geometricPrecision" d="M439 448.3 L441.4 450.3 L439 452.3 Z" fill="#555"/>
<rect x="1" y="458.2" width="454.5" height="12.3" fill="#f3f2f1"/>
<line x1="1" y1="458.4" x2="455.5" y2="458.4" stroke="#dcdcdc" stroke-width="1"/>
<text x="4.9" y="467.7" font-size="7.2" fill="#444" textLength="17.6" lengthAdjust="spacingAndGlyphs" stroke="#444" stroke-width="0.1">Ready</text>
<rect x="277.3" y="458.9" width="22.4" height="10.2" fill="#d4d4d4"/>
<g shape-rendering="geometricPrecision" fill="none" stroke="#6a6a6a" stroke-width="0.9"><rect x="284.3" y="461.3" width="7.4" height="7" rx="0.6"/><path d="M284.3 463.6 H291.7 M284.3 466 H291.7 M286.8 461.3 V468.3 M289.2 461.3 V468.3"/><rect x="307.4" y="461.3" width="8.2" height="7" rx="0.6"/><path d="M309.6 461.3 V468.3 M313.4 461.3 V468.3"/><rect x="330.5" y="461.3" width="8" height="7" rx="0.6"/><path d="M330.5 465.3 H334.8 V461.3"/></g>
<line x1="350.2" y1="465.5" x2="354.8" y2="465.5" stroke="#777" stroke-width="0.9"/>
<line x1="357" y1="465.5" x2="414.7" y2="465.5" stroke="#999" stroke-width="0.8"/>
<rect x="384.6" y="461.8" width="2.6" height="7" fill="#666"/>
<g shape-rendering="geometricPrecision"><path d="M417.8 465.5 H422.4 M420.1 463.2 V467.8" stroke="#777" stroke-width="0.9"/></g>
<text x="430" y="468" font-size="7" fill="#555" textLength="15.2" lengthAdjust="spacingAndGlyphs" stroke="#555" stroke-width="0.1">100%</text>
<rect x="527.8" y="0" width="447.2" height="472" fill="#9a9a9a"/>
<rect x="528.9" y="1" width="444.4" height="469.9" fill="#ffffff"/>
<g shape-rendering="geometricPrecision"><circle cx="540.2" cy="11" r="4.6" fill="none" stroke="#1b3a4a" stroke-width="1.8"/><path d="M538.1 11.2 A2.1 2.1 0 0 0 542.3 11.2 Z" fill="#1b3a4a"/><circle cx="541.1" cy="10.2" r="1.1" fill="#5fbf8f"/></g>
<text x="550.1" y="14.5" font-size="9" fill="#222" textLength="55.8" lengthAdjust="spacingAndGlyphs" stroke="#222" stroke-width="0.22">Export preview</text>
<g shape-rendering="geometricPrecision"><path d="M959.8 7.3 L967 14.5 M967 7.3 L959.8 14.5" stroke="#222" stroke-width="1"/><circle cx="960.8" cy="34.6" r="5.9" fill="#4f84c8"/><text x="960.9" y="38.7" font-size="10.5" font-weight="bold" fill="#f4f8fc" text-anchor="middle">?</text></g>
<rect x="534.4" y="49.9" width="7.2" height="7" fill="#dcdcdc" stroke="#c8c8c8" stroke-width="0.5"/>
<line x1="535.9" y1="53.4" x2="540.1" y2="53.4" stroke="#a0a0a0" stroke-width="0.9"/>
<text x="549.2" y="56.1" font-size="8.6" fill="#222" textLength="23.2" lengthAdjust="spacingAndGlyphs" stroke="#222" stroke-width="0.22">Target</text>
<text x="535.6" y="71.4" font-size="8.6" fill="#222" textLength="22.9" lengthAdjust="spacingAndGlyphs" stroke="#222" stroke-width="0.22">Target</text>
<rect x="562.4" y="61.2" width="103.10000000000002" height="13.899999999999991" fill="#ffffff" stroke="#c2c2c2" stroke-width="1"/>
<rect x="653.4" y="61.7" width="11.600000000000023" height="12.899999999999991" fill="#e5e5e5" stroke="#c4c4c4" stroke-width="0.6"/>
<path shape-rendering="geometricPrecision" d="M656.7 66.75 L659.7 69.75 L662.7 66.75" fill="none" stroke="#555" stroke-width="0.9"/>
<text x="564" y="70.8" font-size="8.5" fill="#222" textLength="37.2" lengthAdjust="spacingAndGlyphs" stroke="#222" stroke-width="0.22">Clipboard</text>
<rect x="537.8" y="82.9" width="9" height="9" fill="#fff" stroke="#5f5f5f" stroke-width="1"/>
<text x="553" y="90" font-size="8.6" fill="#222" textLength="111.4" lengthAdjust="spacingAndGlyphs" stroke="#222" stroke-width="0.22">Load in new Visplore instance</text>
<rect x="534.4" y="102.4" width="7.2" height="7" fill="#dcdcdc" stroke="#c8c8c8" stroke-width="0.5"/>
<line x1="535.9" y1="105.9" x2="540.1" y2="105.9" stroke="#a0a0a0" stroke-width="0.9"/>
<text x="549.2" y="108.6" font-size="8.6" fill="#222" textLength="74.6" lengthAdjust="spacingAndGlyphs" stroke="#222" stroke-width="0.22">Export data preview</text>
<rect x="535.6" y="113.6" width="273.5" height="296.6" fill="#ffffff" stroke="#adadad" stroke-width="1"/>
<text x="537.8" y="125" font-size="8.2" fill="#222" textLength="51.2" lengthAdjust="spacingAndGlyphs" stroke="#222" stroke-width="0.22">Data attribute</text>
<line x1="764.6" y1="116.5" x2="764.6" y2="127.5" stroke="#e0e0e0" stroke-width="1"/>
<text x="766.3" y="125" font-size="8.2" fill="#222" textLength="21.2" lengthAdjust="spacingAndGlyphs" stroke="#222" stroke-width="0.22">Mean</text>
<clipPath id="dclip"><rect x="536" y="114" width="273" height="296"/></clipPath><g clip-path="url(#dclip)">
<text x="539.5" y="139.7" font-size="8.2" fill="#222" textLength="132.6" lengthAdjust="spacingAndGlyphs" stroke="#222" stroke-width="0.22">A_Phase_Voltage_BrightCounty_PV</text>
<text x="768.5" y="139.7" font-size="8.9" fill="#222" textLength="39.5" lengthAdjust="spacingAndGlyphs" stroke="#222" stroke-width="0.22">-0,8660706</text>
<text x="539.5" y="156.25" font-size="8.2" fill="#222" textLength="130.0" lengthAdjust="spacingAndGlyphs" stroke="#222" stroke-width="0.22">A_Phase_Voltage_Cloudington_PV</text>
<text x="768.5" y="156.25" font-size="8.9" fill="#222" textLength="35.1" lengthAdjust="spacingAndGlyphs" stroke="#222" stroke-width="0.22">-0,345271</text>
<text x="539.5" y="172.79999999999998" font-size="8.2" fill="#222" textLength="118.5" lengthAdjust="spacingAndGlyphs" stroke="#222" stroke-width="0.22">A_Phase_Voltage_Eastwood_PV</text>
<text x="768.5" y="172.79999999999998" font-size="8.9" fill="#222" textLength="39.5" lengthAdjust="spacingAndGlyphs" stroke="#222" stroke-width="0.22">-1,5557185</text>
<text x="539.5" y="189.35" font-size="8.2" fill="#222" textLength="131.9" lengthAdjust="spacingAndGlyphs" stroke="#222" stroke-width="0.22">A_Phase_Voltage_FlowerVillage_PV</text>
<text x="768.5" y="189.35" font-size="8.9" fill="#222" textLength="36.9" lengthAdjust="spacingAndGlyphs" stroke="#222" stroke-width="0.22">0,7409807</text>
<text x="539.5" y="205.89999999999998" font-size="8.2" fill="#222" textLength="121.8" lengthAdjust="spacingAndGlyphs" stroke="#222" stroke-width="0.22">A_Phase_Voltage_Happyville_PV</text>
<text x="768.5" y="205.89999999999998" font-size="8.9" fill="#222" textLength="36.9" lengthAdjust="spacingAndGlyphs" stroke="#222" stroke-width="0.22">0,0202968</text>
<text x="539.5" y="222.45" font-size="8.2" fill="#222" textLength="122.8" lengthAdjust="spacingAndGlyphs" stroke="#222" stroke-width="0.22">A_Phase_Voltage_SunriseBay_PV</text>
<text x="768.5" y="222.45" font-size="8.9" fill="#222" textLength="35.1" lengthAdjust="spacingAndGlyphs" stroke="#222" stroke-width="0.22">-3,444093</text>
<text x="539.5" y="239.0" font-size="8.2" fill="#222" textLength="166.1" lengthAdjust="spacingAndGlyphs" stroke="#222" stroke-width="0.22">A_Phase_Voltage_SunriseBay_PV_Forecast_1</text>
<text x="768.5" y="239.0" font-size="8.9" fill="#222" textLength="39.5" lengthAdjust="spacingAndGlyphs" stroke="#222" stroke-width="0.22">-3,5763021</text>
<text x="539.5" y="255.55" font-size="8.2" fill="#222" textLength="166.1" lengthAdjust="spacingAndGlyphs" stroke="#222" stroke-width="0.22">A_Phase_Voltage_SunriseBay_PV_Forecast_2</text>
<text x="768.5" y="255.55" font-size="8.9" fill="#222" textLength="39.5" lengthAdjust="spacingAndGlyphs" stroke="#222" stroke-width="0.22">-3,5035069</text>
<text x="539.5" y="272.1" font-size="8.2" fill="#222" textLength="166.1" lengthAdjust="spacingAndGlyphs" stroke="#222" stroke-width="0.22">A_Phase_Voltage_SunriseBay_PV_Forecast_3</text>
<text x="768.5" y="272.1" font-size="8.9" fill="#222" textLength="39.5" lengthAdjust="spacingAndGlyphs" stroke="#222" stroke-width="0.22">-3,1384003</text>
<text x="539.5" y="288.65" font-size="8.2" fill="#222" textLength="161.9" lengthAdjust="spacingAndGlyphs" stroke="#222" stroke-width="0.22">Air_Density_Indoor_BrightCounty_Weather</text>
<text x="768.5" y="288.65" font-size="8.9" fill="#222" textLength="36.9" lengthAdjust="spacingAndGlyphs" stroke="#222" stroke-width="0.22">0,0726392</text>
<text x="539.5" y="305.2" font-size="8.2" fill="#222" textLength="147.3" lengthAdjust="spacingAndGlyphs" stroke="#222" stroke-width="0.22">Air_Density_Indoor_Eastwood_Weather</text>
<text x="768.5" y="305.2" font-size="8.9" fill="#222" textLength="36.9" lengthAdjust="spacingAndGlyphs" stroke="#222" stroke-width="0.22">0,0734823</text>
<text x="539.5" y="321.75" font-size="8.2" fill="#222" textLength="158.9" lengthAdjust="spacingAndGlyphs" stroke="#222" stroke-width="0.22">Air_Density_Indoor_Fantasytown_Weather</text>
<text x="768.5" y="321.75" font-size="8.9" fill="#222" textLength="36.9" lengthAdjust="spacingAndGlyphs" stroke="#222" stroke-width="0.22">0,0736439</text>
<text x="539.5" y="338.3" font-size="8.2" fill="#222" textLength="150.8" lengthAdjust="spacingAndGlyphs" stroke="#222" stroke-width="0.22">Air_Density_Indoor_Happyville_Weather</text>
<text x="768.5" y="338.3" font-size="8.9" fill="#222" textLength="36.9" lengthAdjust="spacingAndGlyphs" stroke="#222" stroke-width="0.22">0,0738764</text>
<text x="539.5" y="354.85" font-size="8.2" fill="#222" textLength="149.5" lengthAdjust="spacingAndGlyphs" stroke="#222" stroke-width="0.22">Air_Density_Indoor_SunnyCity_Weather</text>
<text x="768.5" y="354.85" font-size="8.9" fill="#222" textLength="36.9" lengthAdjust="spacingAndGlyphs" stroke="#222" stroke-width="0.22">0,0717209</text>
<text x="539.5" y="371.4" font-size="8.2" fill="#222" textLength="131.5" lengthAdjust="spacingAndGlyphs" stroke="#222" stroke-width="0.22">Apparent_Power_BrightCounty_PV</text>
<text x="768.5" y="371.4" font-size="8.9" fill="#222" textLength="36.9" lengthAdjust="spacingAndGlyphs" stroke="#222" stroke-width="0.22">0,2392017</text>
<text x="539.5" y="387.95" font-size="8.2" fill="#222" textLength="128.5" lengthAdjust="spacingAndGlyphs" stroke="#222" stroke-width="0.22">Apparent_Power_Cloudington_PV</text>
<text x="768.5" y="387.95" font-size="8.9" fill="#222" textLength="36.9" lengthAdjust="spacingAndGlyphs" stroke="#222" stroke-width="0.22">0,7086084</text>
<text x="539.5" y="404.5" font-size="8.2" fill="#222" textLength="117.0" lengthAdjust="spacingAndGlyphs" stroke="#222" stroke-width="0.22">Apparent_Power_Eastwood_PV</text>
<text x="768.5" y="404.5" font-size="8.9" fill="#222" textLength="39.5" lengthAdjust="spacingAndGlyphs" stroke="#222" stroke-width="0.22">-0,7142314</text>
</g>
<rect x="812.5" y="113.5" width="11.2" height="297.5" fill="#f0f0f0"/>
<rect x="813.5" y="124.5" width="9" height="49.1" fill="#cdcdcd"/>
<path shape-rendering="geometricPrecision" d="M815.6 120.6 L818.1 118.1 L820.6 120.6" fill="none" stroke="#a0a0a0" stroke-width="0.9"/>
<path shape-rendering="geometricPrecision" d="M815.6 404 L818.1 406.5 L820.6 404" fill="none" stroke="#505050" stroke-width="1.1"/>
<rect x="535.4" y="413.4" width="275" height="10.3" fill="#f0f0f0"/>
<rect x="547.8" y="414.4" width="131.3" height="8.3" fill="#cdcdcd"/>
<path shape-rendering="geometricPrecision" d="M542.5 416 L540 418.5 L542.5 421" fill="none" stroke="#a0a0a0" stroke-width="0.9"/>
<path shape-rendering="geometricPrecision" d="M803 416 L805.5 418.5 L803 421" fill="none" stroke="#505050" stroke-width="1.1"/>
<text x="535.4" y="439.3" font-size="8.6" fill="#222" textLength="93.7" lengthAdjust="spacingAndGlyphs" stroke="#222" stroke-width="0.22">Number of preview rows</text>
<rect x="737.8" y="428.5" width="47.3" height="15.6" fill="#ffffff" stroke="#b0b0b0" stroke-width="1"/>
<text x="740" y="440" font-size="8.4" fill="#222" textLength="13" lengthAdjust="spacingAndGlyphs" stroke="#222" stroke-width="0.22">100</text>
<rect x="787.8" y="428.5" width="16.6" height="15.6" fill="#e1e1e1" stroke="#b8b8b8" stroke-width="1"/>
<rect x="806.1" y="428.5" width="16.6" height="15.6" fill="#e1e1e1" stroke="#b8b8b8" stroke-width="1"/>
<line x1="790.8" y1="436.3" x2="800.2" y2="436.3" stroke="#8a8a8a" stroke-width="1.6"/>
<line x1="809.2" y1="436.3" x2="818.8" y2="436.3" stroke="#8a8a8a" stroke-width="1.6"/>
<line x1="814" y1="431.5" x2="814" y2="441.1" stroke="#8a8a8a" stroke-width="1.6"/>
<rect x="901.5" y="451.5" width="31.5" height="15.9" fill="#e1e1e1" stroke="#adadad" stroke-width="1"/>
<text x="912" y="462.8" font-size="8.6" fill="#222" textLength="11" lengthAdjust="spacingAndGlyphs" stroke="#222" stroke-width="0.22">OK</text>
<line x1="912" y1="464.6" x2="918.2" y2="464.6" stroke="#222" stroke-width="0.8"/>
<rect x="937.5" y="451.5" width="31.5" height="15.9" fill="#e1e1e1" stroke="#adadad" stroke-width="1"/>
<text x="940.5" y="462.8" font-size="8.6" fill="#222" textLength="26" lengthAdjust="spacingAndGlyphs" stroke="#222" stroke-width="0.22">Cancel</text>
<line x1="940.5" y1="464.6" x2="945.6" y2="464.6" stroke="#222" stroke-width="0.8"/>
<line x1="831" y1="102.8" x2="970" y2="102.8" stroke="#a0a0a0" stroke-width="1"/>
<rect x="835.2" y="106.7" width="7.2" height="7" fill="#dcdcdc" stroke="#c8c8c8" stroke-width="0.5"/>
<line x1="836.7" y1="110.2" x2="840.9000000000001" y2="110.2" stroke="#a0a0a0" stroke-width="0.9"/>
<text x="850" y="113" font-size="8.6" fill="#222" textLength="27" lengthAdjust="spacingAndGlyphs" stroke="#222" stroke-width="0.22">Format</text>
<text x="836" y="128.5" font-size="8.6" fill="#222" textLength="50.4" lengthAdjust="spacingAndGlyphs" stroke="#222" stroke-width="0.22">File encoding</text>
<text x="836" y="146.3" font-size="8.6" fill="#222" textLength="58.8" lengthAdjust="spacingAndGlyphs" stroke="#222" stroke-width="0.22">Value separator</text>
<text x="836" y="164.5" font-size="8.6" fill="#222" textLength="67.8" lengthAdjust="spacingAndGlyphs" stroke="#222" stroke-width="0.22">Decimal separator</text>
<rect x="907.6" y="117.9" width="60.0" height="14.199999999999989" fill="#ffffff" stroke="#c2c2c2" stroke-width="1"/>
<rect x="955.5" y="118.4" width="11.600000000000023" height="13.199999999999989" fill="#e5e5e5" stroke="#c4c4c4" stroke-width="0.6"/>
<path shape-rendering="geometricPrecision" d="M958.8 123.6 L961.8 126.6 L964.8 123.6" fill="none" stroke="#555" stroke-width="0.9"/>
<text x="910" y="127.8" font-size="8.5" fill="#222" textLength="19.1" lengthAdjust="spacingAndGlyphs" stroke="#222" stroke-width="0.22">Utf-8</text>
<rect x="907.6" y="136.0" width="60.0" height="14.199999999999989" fill="#ffffff" stroke="#c2c2c2" stroke-width="1"/>
<rect x="955.5" y="136.5" width="11.600000000000023" height="13.199999999999989" fill="#e5e5e5" stroke="#c4c4c4" stroke-width="0.6"/>
<path shape-rendering="geometricPrecision" d="M958.8 141.7 L961.8 144.7 L964.8 141.7" fill="none" stroke="#555" stroke-width="0.9"/>
<text x="910" y="145.89999999999998" font-size="8.5" fill="#222" textLength="38.5" lengthAdjust="spacingAndGlyphs" stroke="#222" stroke-width="0.22">Tabulator</text>
<rect x="907.6" y="154.2" width="60.0" height="14.200000000000017" fill="#ffffff" stroke="#c2c2c2" stroke-width="1"/>
<rect x="955.5" y="154.7" width="11.600000000000023" height="13.200000000000017" fill="#e5e5e5" stroke="#c4c4c4" stroke-width="0.6"/>
<path shape-rendering="geometricPrecision" d="M958.8 159.9 L961.8 162.9 L964.8 159.9" fill="none" stroke="#555" stroke-width="0.9"/>
<text x="910" y="164.1" font-size="8.5" fill="#222" stroke="#222" stroke-width="0.22">,</text>
<line x1="831" y1="173.4" x2="970" y2="173.4" stroke="#a0a0a0" stroke-width="1"/>
<rect x="835.2" y="177.6" width="7.2" height="7" fill="#dcdcdc" stroke="#c8c8c8" stroke-width="0.5"/>
<line x1="836.7" y1="181.1" x2="840.9000000000001" y2="181.1" stroke="#a0a0a0" stroke-width="0.9"/>
<line x1="838.8000000000001" y1="179.0" x2="838.8000000000001" y2="183.2" stroke="#a0a0a0" stroke-width="0.9"/>
<text x="850" y="183.6" font-size="8.6" fill="#222" textLength="60.8" lengthAdjust="spacingAndGlyphs" stroke="#222" stroke-width="0.22">Visible Elements</text>
<g shape-rendering="geometricPrecision">
<path shape-rendering="geometricPrecision" d="M467.3 115.2 H499.2 V106 L517.9 124.3 L499.2 142.6 V134 H467.3 Z" fill="#7bc8a0"/>
<path shape-rendering="geometricPrecision" d="M517 347.1 H484.8 V337.8 L466 356.3 L484.8 374.9 V365.7 H517 Z" fill="#7bc8a0"/>
<rect x="378.5" y="29.5" width="51" height="23.8" fill="none" stroke="#7bc8a0" stroke-width="5" rx="5"/>
<rect x="379.8" y="55.9" width="79.2" height="44" fill="#f0f0f0" stroke="#8a8a8a" stroke-width="1"/>
<rect x="384.8" y="60.7" width="9.6" height="9.6" fill="#f4f4f4" stroke="#8c8c8c" stroke-width="0.9"/>
<rect x="386" y="62" width="7.2" height="7" fill="#a9d3f5"/>
<path shape-rendering="geometricPrecision" d="M386 69 L388.8 65.2 L391 67.3 L393.2 65.8 V69 Z" fill="#3f7fc6"/>
<rect x="390.6" y="66" width="6.4" height="6.6" fill="#5b8fcf" rx="0.6"/>
<rect x="391.70000000000005" y="66.6" width="4.2" height="2.2" fill="#f3c37a"/>
<rect x="391.90000000000003" y="69.9" width="3.8" height="2.7" fill="#dde8f5"/>
<text x="398.8" y="70.2" font-size="10" fill="#1e1a2e" textLength="55.2" lengthAdjust="spacingAndGlyphs" stroke="#1e1a2e" stroke-width="0.22">Image export</text>
<rect x="379.3" y="77" width="81.2" height="21.3" fill="#ebebeb" stroke="#7bc8a0" stroke-width="5" rx="5"/>
<rect x="384.6" y="81.8" width="10.2" height="1.2" fill="#8fb9e6"/>
<rect x="384.6" y="84.2" width="10.2" height="1.2" fill="#8fb9e6"/>
<rect x="384.6" y="86.6" width="10.2" height="1.2" fill="#8fb9e6"/>
<rect x="384.6" y="89" width="10.2" height="1.2" fill="#8fb9e6"/>
<rect x="387.6" y="81.8" width="0.9" height="8.4" fill="#c5d9ef"/>
<rect x="391.2" y="81.8" width="0.9" height="8.4" fill="#c5d9ef"/>
<rect x="390.6" y="86.4" width="6.4" height="6.6" fill="#5b8fcf" rx="0.6"/>
<rect x="391.70000000000005" y="87.0" width="4.2" height="2.2" fill="#f3c37a"/>
<rect x="391.90000000000003" y="90.30000000000001" width="3.8" height="2.7" fill="#dde8f5"/>
<text x="398.8" y="89.9" font-size="10" fill="#1e1a2e" textLength="48.2" lengthAdjust="spacingAndGlyphs" stroke="#1e1a2e" stroke-width="0.22">Data export</text>
<g transform="translate(440.6,93)"><path d="M-2.1 1.6 Q-2.1 -0.3 0 -0.3 Q2.1 -0.3 2.1 1.6 L2.1 8.4 Q2.1 6.9 4 6.9 Q5.9 6.9 5.9 8.6 L5.9 9.9 Q5.9 8.4 7.8 8.4 Q9.7 8.4 9.7 10.1 L9.7 11.5 Q9.7 10 12 10 Q14.3 10 14.3 11.8 L14.3 22 L12.8 25.5 L12.8 29.8 L-1.2 29.8 L-1.2 26.5 L-7.8 17.5 Q-9.2 15.2 -7.8 13.3 Q-6.2 11.8 -4.2 13.6 L-2.1 15.8 Z" fill="#fff" stroke="#000" stroke-width="1.15" stroke-linejoin="round"/><path d="M5.9 8.6 V13.5 M9.7 10.1 V13.5" stroke="#000" stroke-width="0.8"/></g>
</g>
</svg></body></html>
